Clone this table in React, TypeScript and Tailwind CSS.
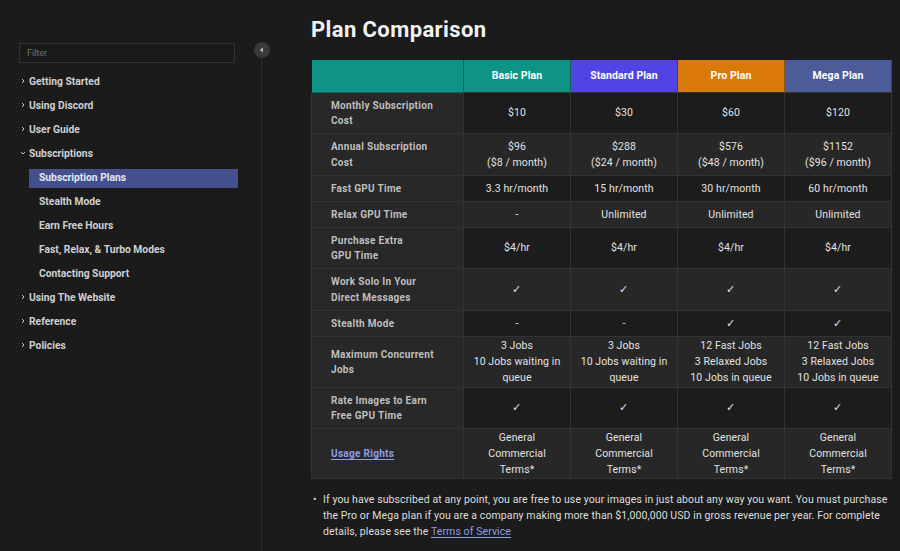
import { ReactNode } from "react";

type Row = {
  label: ReactNode;
  h: string;
  values: ReactNode[];
};

const CHECK = "✓";

const rows: Row[] = [
  { label: <>Monthly Subscription<br />Cost</>, h: "h-[41px]", values: ["$10", "$30", "$60", "$120"] },
  {
    label: <>Annual Subscription<br />Cost</>,
    h: "h-[42px]",
    values: [
      <>$96<br />($8 / month)</>,
      <>$288<br />($24 / month)</>,
      <>$576<br />($48 / month)</>,
      <>$1152<br />($96 / month)</>,
    ],
  },
  { label: "Fast GPU Time", h: "h-[26px]", values: ["3.3 hr/month", "15 hr/month", "30 hr/month", "60 hr/month"] },
  { label: "Relax GPU Time", h: "h-[26px]", values: ["-", "Unlimited", "Unlimited", "Unlimited"] },
  { label: <>Purchase Extra<br />GPU Time</>, h: "h-[41px]", values: ["$4/hr", "$4/hr", "$4/hr", "$4/hr"] },
  { label: <>Work Solo In Your<br />Direct Messages</>, h: "h-[42px]", values: [CHECK, CHECK, CHECK, CHECK] },
  { label: "Stealth Mode", h: "h-[26px]", values: ["-", "-", CHECK, CHECK] },
  {
    label: <>Maximum Concurrent<br />Jobs</>,
    h: "h-[51px]",
    values: [
      <>3 Jobs<br />10 Jobs waiting in<br />queue</>,
      <>3 Jobs<br />10 Jobs waiting in<br />queue</>,
      <>12 Fast Jobs<br />3 Relaxed Jobs<br />10 Jobs in queue</>,
      <>12 Fast Jobs<br />3 Relaxed Jobs<br />10 Jobs in queue</>,
    ],
  },
  { label: <>Rate Images to Earn<br />Free GPU Time</>, h: "h-[41px]", values: [CHECK, CHECK, CHECK, CHECK] },
  {
    label: <a href="#" className="text-[#8d9fe6] underline underline-offset-2">Usage Rights</a>,
    h: "h-[50px]",
    values: Array.from({ length: 4 }, () => <>General<br />Commercial<br />Terms*</>),
  },
];

const nav = [
  { label: "Getting Started" },
  { label: "Using Discord" },
  { label: "User Guide" },
  {
    label: "Subscriptions",
    open: true,
    children: ["Subscription Plans", "Stealth Mode", "Earn Free Hours", "Fast, Relax, & Turbo Modes", "Contacting Support"],
  },
  { label: "Using The Website" },
  { label: "Reference" },
  { label: "Policies" },
];

function Chevron({ open }: { open?: boolean }) {
  return (
    <svg width="6" height="6" viewBox="0 0 6 6" className="shrink-0 -mt-[2px]" fill="none" stroke="#c4c4c4" strokeWidth="1">
      {open ? <path d="M1 2l2 2 2-2" /> : <path d="M2 1l2 2-2 2" />}
    </svg>
  );
}

function Sidebar() {
  return (
    <aside className="flex shrink-0 h-[551px]">
      <div className="w-[238px] pl-[19px] pt-[39px]">
        <input
          placeholder="Filter"
          className="w-[216px] h-[20px] border border-[#333] bg-[#1a1a1a] px-[7px] text-[9px] text-[#ccc] placeholder:text-[#6f6f6f] outline-none"
        />
        <ul className="mt-[7px] text-[10.3px] font-bold text-[#cfcfcf]">
          {nav.map((n) => (
            <li key={n.label}>
              <div className="flex items-center gap-[3px] h-[24px] pl-[1px]">
                <Chevron open={n.open} />
                <span>{n.label}</span>
              </div>
              {n.children && (
                <ul className="pl-[10px]">
                  {n.children.map((c, i) => (
                    <li
                      key={c}
                      className={
                        i === 0
                          ? "h-[19px] my-[2.5px] flex items-center pl-[10px] bg-[#44508e] text-[#e4e6f2]"
                          : "h-[24px] flex items-center pl-[10px]"
                      }
                    >
                      {c}
                    </li>
                  ))}
                </ul>
              )}
            </li>
          ))}
        </ul>
      </div>
      <div className="w-[46px] flex flex-col items-center pt-[42px] pl-[1px]">
        <button className="w-[16px] h-[16px] rounded-full bg-[#3a3a3a] flex items-center justify-center shrink-0">
          <svg width="5" height="6" viewBox="0 0 5 6">
            <path d="M4 0.5v5L0.8 3z" fill="#b5b5b5" />
          </svg>
        </button>
        <div className="w-px flex-1 bg-[#2e2e2e]" />
      </div>
    </aside>
  );
}

const headers = [
  { label: "Basic Plan", bg: "bg-[#0e9486]" },
  { label: "Standard Plan", bg: "bg-[#5144e4]" },
  { label: "Pro Plan", bg: "bg-[#d9790a]" },
  { label: "Mega Plan", bg: "bg-[#4b5c98]" },
];

export default function App() {
  return (
    <div className="flex w-[900px] h-[551px] overflow-hidden bg-[#1b1b1b] font-['Roboto',sans-serif]">
      <Sidebar />
      <main className="pl-[27px] w-[607px] shrink-0">
        <h1 className="pt-[16px] text-[22px] leading-[28px] font-bold tracking-[0.4px] text-[#f2f2f2]">Plan Comparison</h1>
        <table className="mt-[15px] w-[580px] border-collapse table-fixed text-[10.5px] tracking-[0.1px] text-[#e2e2e2]">
          <colgroup>
            <col className="w-[152px]" />
            <col className="w-[107px]" />
            <col className="w-[107px]" />
            <col className="w-[107px]" />
            <col className="w-[107px]" />
          </colgroup>
          <thead>
            <tr className="h-[33px]">
              <th className="bg-[#0e9486] border border-[#1b1b1b]/40" />
              {headers.map((h) => (
                <th key={h.label} className={`${h.bg} border-x border-[#1b1b1b]/40 font-bold text-white text-center`}>
                  {h.label}
                </th>
              ))}
            </tr>
          </thead>
          <tbody>
            {rows.map((r, ri) => (
              <tr key={ri} className={r.h}>
                <td className="bg-[#282828] border border-[#333] pl-[19px] pr-2 py-0 text-[10px] leading-[15.5px] font-bold tracking-[0.3px] text-[#bfbfbf]">
                  {r.label}
                </td>
                {r.values.map((v, vi) => (
                  <td
                    key={vi}
                    className={`${ri % 2 === 0 ? "bg-[#1c1c1c]" : "bg-[#272727]"} border border-[#333] text-center leading-[16px] py-0 px-1`}
                  >
                    {v}
                  </td>
                ))}
              </tr>
            ))}
          </tbody>
        </table>
        <ul className="mt-[13px] pl-[12px] pb-[11px] border-b border-[#2e2e2e] text-[10.5px] leading-[16px] tracking-[0.1px] text-[#dedede]">
          <li className="relative">
            <span className="absolute left-[-10px] top-0">•</span>
            If you have subscribed at any point, you are free to use your images in just about any way you want. You must
            purchase the Pro or Mega plan if you are a company making more than $1,000,000 USD in gross revenue per year. For
            complete details, please see the{" "}
            <a href="#" className="text-[#8d9fe6] underline underline-offset-2">
              Terms of Service
            </a>
          </li>
        </ul>
      </main>
    </div>
  );
}
